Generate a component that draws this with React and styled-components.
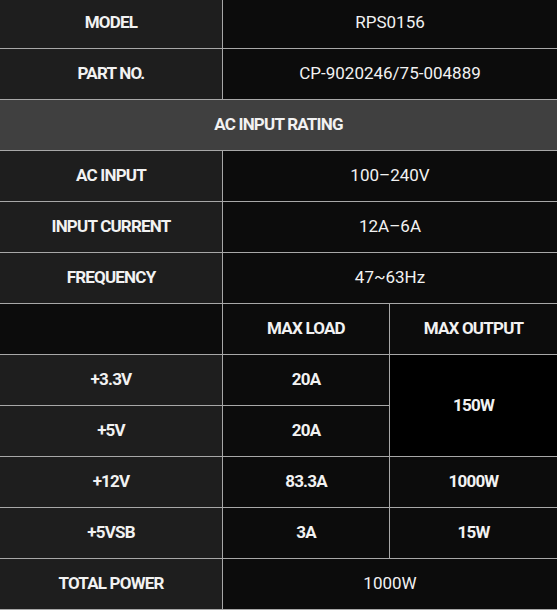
import React from 'react'
import styled, { createGlobalStyle } from 'styled-components'

const Global = createGlobalStyle`
  html, body { margin: 0; padding: 0; background: #0c0c0c; overflow: hidden; }
  body { font-family: Roboto, "Liberation Sans", Arial, sans-serif; }
`;

const Grid = styled.div`
  display: grid;
  width: 557px;
  margin-top: -2px;
  grid-template-columns: 222px 166px 167px;
  grid-auto-rows: 50px;
  gap: 1px;
  padding-bottom: 1px;
  background: #a8a8a8;
`;

const tones = {
  label: '#1e1e1e',
  value: '#0c0c0c',
  head: '#404040',
  dark: '#000000',
};

const Cell = styled.div`
  display: flex;
  align-items: center;
  justify-content: center;
  padding-bottom: 2px;
  background: ${(p) => tones[p.tone || 'value']};
  color: #f2f2f2;
  font-size: 17px;
  font-weight: ${(p) => (p.bold ? 700 : 400)};
  letter-spacing: ${(p) => (p.bold ? '-0.8px' : '0')};
  grid-column: ${(p) => (p.cols ? `span ${p.cols}` : 'auto')};
  grid-row: ${(p) => (p.rows ? `span ${p.rows}` : 'auto')};
`;

const info = [
  ['MODEL', 'RPS0156'],
  ['PART NO.', 'CP-9020246/75-004889'],
];

const input = [
  ['AC INPUT', '100–240V'],
  ['INPUT CURRENT', '12A–6A'],
  ['FREQUENCY', '47~63Hz'],
];

const App = () => {
  return (
    <>
      <Global />
      <Grid>
        {info.map(([k, v]) => (
          <React.Fragment key={k}>
            <Cell tone="label" bold>{k}</Cell>
            <Cell cols={2}>{v}</Cell>
          </React.Fragment>
        ))}
        <Cell tone="head" bold cols={3}>AC INPUT RATING</Cell>
        {input.map(([k, v]) => (
          <React.Fragment key={k}>
            <Cell tone="label" bold>{k}</Cell>
            <Cell cols={2}>{v}</Cell>
          </React.Fragment>
        ))}
        <Cell />
        <Cell bold>MAX LOAD</Cell>
        <Cell bold>MAX OUTPUT</Cell>

        <Cell tone="label" bold>+3.3V</Cell>
        <Cell bold>20A</Cell>
        <Cell tone="dark" bold rows={2}>150W</Cell>
        <Cell tone="label" bold>+5V</Cell>
        <Cell bold>20A</Cell>

        <Cell tone="label" bold>+12V</Cell>
        <Cell bold>83.3A</Cell>
        <Cell bold>1000W</Cell>

        <Cell tone="label" bold>+5VSB</Cell>
        <Cell bold>3A</Cell>
        <Cell bold>15W</Cell>

        <Cell tone="label" bold>TOTAL POWER</Cell>
        <Cell cols={2}>1000W</Cell>
      </Grid>
    </>
  )
}

export default App
